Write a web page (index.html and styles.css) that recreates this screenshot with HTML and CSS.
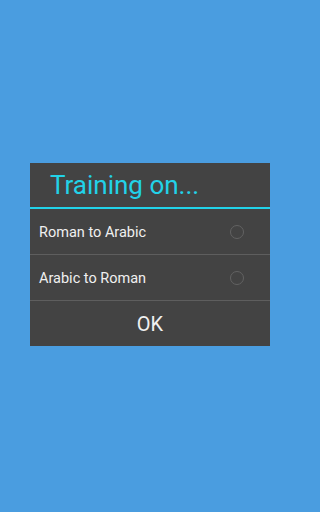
FILE: index.html
```html
<!DOCTYPE html>
<html>
<head>
<meta charset="utf-8">
<link rel="stylesheet" href="styles.css">
</head>
<body>
<div class="dialog">
  <div class="title">Training on...</div>
  <div class="option">
    <span class="label">Roman to Arabic</span>
    <span class="radio"></span>
  </div>
  <div class="option">
    <span class="label">Arabic to Roman</span>
    <span class="radio"></span>
  </div>
  <div class="ok">OK</div>
</div>
</body>
</html>
```
FILE: styles.css
```css
html, body {
  margin: 0;
  padding: 0;
}
body {
  width: 300px;
  height: 512px;
  background: #4a9de0;
  font-family: Roboto, "Liberation Sans", sans-serif;
  overflow: hidden;
}
.dialog {
  margin: 163px 30px 0;
  width: 240px;
  background: #434343;
}
.title {
  height: 44px;
  line-height: 44px;
  padding-left: 20px;
  font-size: 26px;
  color: #22d2e8;
  border-bottom: 2px solid #22d2e8;
}
.option {
  display: flex;
  align-items: center;
  justify-content: space-between;
  height: 45px;
  padding: 0 26px 0 9px;
  border-bottom: 1px solid #5e5e5e;
  color: #f0f0f0;
  font-size: 14.5px;
}
.label {
  padding-top: 2px;
}
.radio {
  width: 12px;
  height: 12px;
  border: 1.5px solid #626262;
  border-radius: 50%;
}
.ok {
  height: 45px;
  line-height: 46px;
  text-align: center;
  color: #f0f0f0;
  font-size: 20px;
}
```
